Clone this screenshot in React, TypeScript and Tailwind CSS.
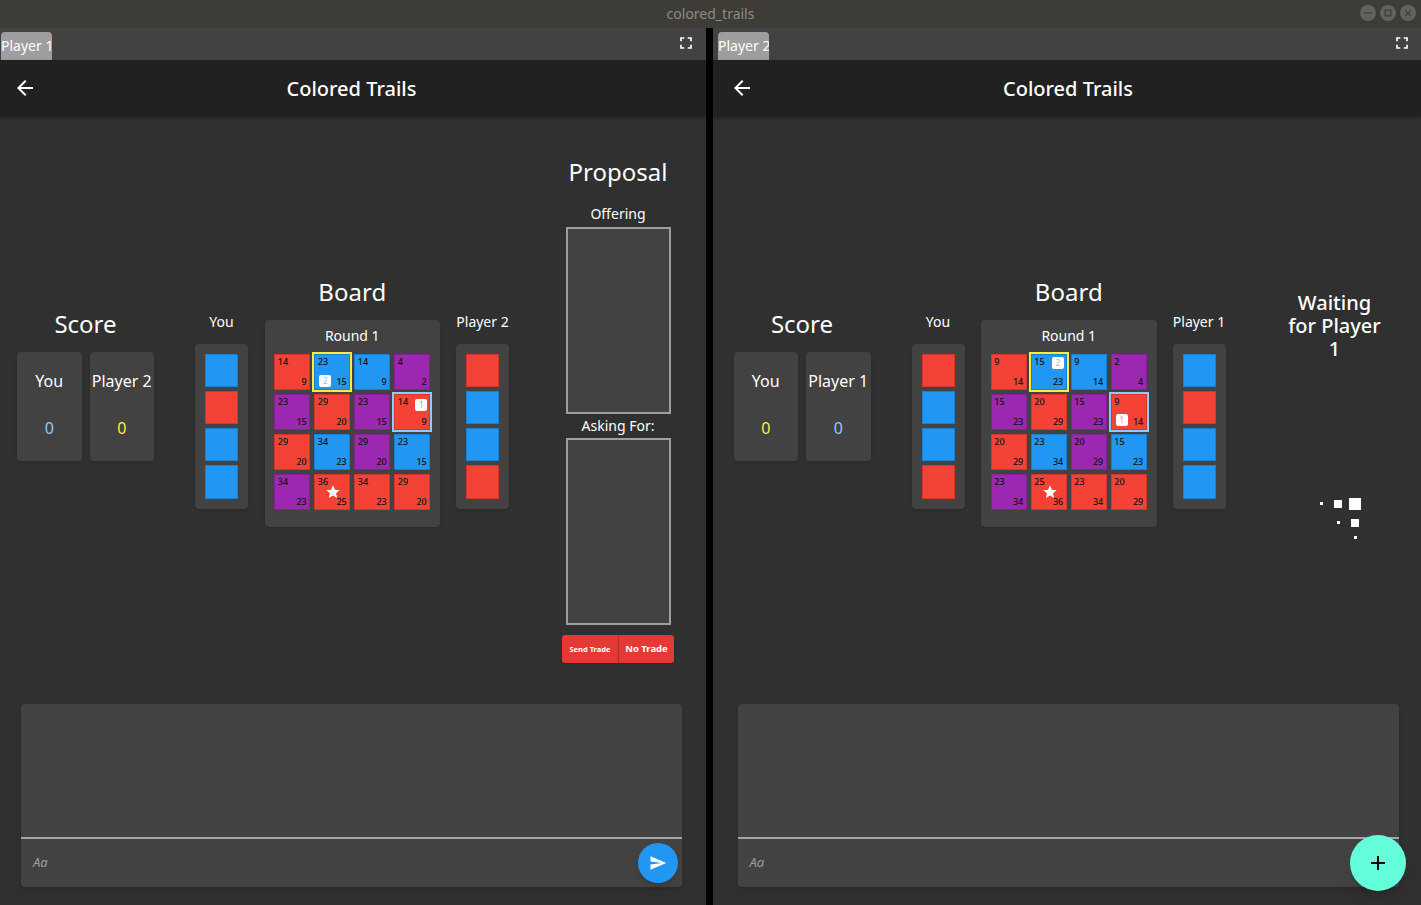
import React from "react";

type C = "r" | "b" | "p";
const bg: Record<C, string> = { r: "bg-[#f44336]", b: "bg-[#2196f3]", p: "bg-[#9c27b0]" };

type T = { c: C; a: number; z: number };
const layout: C[][] = [
  ["r", "b", "b", "p"],
  ["p", "r", "p", "r"],
  ["r", "b", "p", "b"],
  ["p", "r", "r", "r"],
];
const scores: [number, number][][] = [
  [[14, 9], [23, 15], [14, 9], [4, 2]],
  [[23, 15], [29, 20], [23, 15], [14, 9]],
  [[29, 20], [34, 23], [29, 20], [23, 15]],
  [[34, 23], [36, 25], [34, 23], [29, 20]],
];

function Icon({ d, size, className }: { d: string; size: number; className?: string }) {
  return (
    <svg width={size} height={size} viewBox="0 0 24 24" fill="currentColor" className={className}>
      <path d={d} />
    </svg>
  );
}

const ARROW = "M20 11H7.83l5.59-5.59L12 4l-8 8 8 8 1.41-1.41L7.83 13H20v-2z";
const FULL = "M7 14H5v5h5v-2H7v-3zm-2-4h2V7h3V5H5v5zm12 7h-3v2h5v-5h-2v3zM14 5v2h3v3h2V5h-5z";
const STAR = "M12 17.27L18.18 21l-1.64-7.03L22 9.24l-7.19-.61L12 2 9.19 8.63 2 9.24l5.46 4.73L5.82 21z";
const SEND = "M2.01 21L23 12 2.01 3 2 10l15 2-15 2z";
const PLUS = "M19 13h-6v6h-2v-6H5v-2h6V5h2v6h6v2z";

function Chip({ n, className }: { n: number; className: string }) {
  return (
    <span
      className={`absolute w-3 h-3 rounded-[2px] bg-white flex items-center justify-center text-[8px] leading-none font-medium ${className}`}
    >
      {n}
    </span>
  );
}

function Tile({ r, c, flipped }: { r: number; c: number; flipped: boolean }) {
  const color = layout[r][c];
  const [x, y] = scores[r][c];
  const top = flipped ? y : x;
  const bot = flipped ? x : y;
  const isYellow = r === 0 && c === 1;
  const isBlue = r === 1 && c === 3;
  return (
    <div
      className={`relative w-9 h-9 ${bg[color]} border border-black/15 flex flex-col justify-between px-[2.5px] pt-[1px] pb-[1px] text-[9px] leading-[12px] font-medium text-[#111] ${
        isYellow ? "outline-2 outline-offset-[0.5px] outline-[#ffeb3b]" : ""
      } ${isBlue ? "outline-2 outline-offset-[0.5px] outline-[#90caf9]" : ""}`}
    >
      <span className="text-left">{top}</span>
      <span className="text-right">{bot}</span>
      {isYellow && (
        <Chip n={2} className={`text-[#90caf9] ${flipped ? "top-[2px] right-[2px]" : "bottom-[2px] left-[4px]"}`} />
      )}
      {isBlue && (
        <Chip n={1} className={`text-[#ef9a9a] ${flipped ? "bottom-[3px] left-[4px]" : "top-[4px] right-[2px]"}`} />
      )}
      {r === 3 && c === 1 && (
        <Icon d={STAR} size={16} className="absolute left-[10px] top-[9px] text-white" />
      )}
    </div>
  );
}

function Hand({ label, colors, className }: { label: string; colors: C[]; className: string }) {
  return (
    <div className={`flex flex-col items-center w-[53px] shrink-0 ${className}`}>
      <div className="h-5 text-sm leading-5 whitespace-nowrap text-white">{label}</div>
      <div className="mt-3 w-[53px] h-[165px] rounded bg-[#424242] shadow-sm flex flex-col items-center gap-1 pt-[10px]">
        {colors.map((k, i) => (
          <div key={i} className={`w-[33px] h-[33.3px] ${bg[k]} border border-black/15`} />
        ))}
      </div>
    </div>
  );
}

function ScoreCard({ name, color }: { name: string; color: string }) {
  return (
    <div className="w-[64.5px] h-[109px] rounded bg-[#424242] shadow-sm flex flex-col items-center pt-[17px]">
      <div className="text-base leading-6 whitespace-nowrap text-white">{name}</div>
      <div className={`mt-[23px] text-base leading-6 ${color}`}>0</div>
    </div>
  );
}

function Spinner() {
  const sizes = [3, 8, 12, 0, 3, 8, 0, 0, 3];
  return (
    <div className="grid grid-cols-3 w-[50px] h-[50px] mt-[133px] ml-[8px]">
      {sizes.map((s, i) => (
        <div key={i} className="flex items-center justify-center">
          {s > 0 && <div className="bg-white" style={{ width: s, height: s }} />}
        </div>
      ))}
    </div>
  );
}

function ProposalBox() {
  return <div className="w-[105px] h-[187px] border-2 border-[#9e9e9e] bg-[#424242]" />;
}

function Pane({ me, other, flipped }: { me: C[]; other: C[]; flipped: boolean }) {
  const oppName = flipped ? "Player 1" : "Player 2";
  return (
    <div className={`h-full flex flex-col bg-[#303030] relative ${flipped ? "flex-1" : "w-[706px]"}`}>
      <div className={`h-8 shrink-0 bg-[#424242] flex items-end justify-between ${flipped ? "pl-[5px] pr-[9px]" : "pl-[1px] pr-[10px]"}`}>
        <div className="w-[51px] h-7 rounded-t-[4px] bg-[#9e9e9e] text-sm leading-7 text-white text-center whitespace-nowrap overflow-hidden">
          {flipped ? "Player 2" : "Player 1"}
        </div>
        <Icon d={FULL} size={20} className="text-white self-center -mt-[2px]" />
      </div>

      <div className={`w-[703px] flex-1 flex flex-col ${flipped ? "ml-[3.5px]" : ""}`}>
        <div className={`h-14 shrink-0 bg-[#212121] flex items-center text-white relative pl-[13px] shadow-[0_2px_4px_rgba(0,0,0,0.3)] ${flipped ? "w-[707.5px] -ml-[3.5px] pl-[16.5px]" : "w-[706px]"}`}>
          <Icon d={ARROW} size={24} />
          <div className={`absolute top-0 h-14 leading-[58px] w-[703px] text-center text-xl font-medium ${flipped ? "left-[3.5px]" : "left-0"}`}>
            Colored Trails
          </div>
        </div>

        <div className="h-[588px] flex items-center pl-[17px]">
          <div className="w-[137px] shrink-0 mb-[49px]">
            <div className="h-7 text-2xl leading-7 text-center text-white">Score</div>
            <div className="mt-[14px] flex justify-between">
              <ScoreCard name="You" color={flipped ? "text-[#ffeb3b]" : "text-[#90caf9]"} />
              <ScoreCard name={oppName} color={flipped ? "text-[#90caf9]" : "text-[#ffeb3b]"} />
            </div>
          </div>

          <Hand label="You" colors={me} className="ml-[41px]" />

          <div className="ml-[16.5px] w-[175.5px] shrink-0 mb-[15px]">
            <div className="h-7 text-2xl leading-7 text-center text-white">Board</div>
            <div className="mt-[14px] h-[207px] rounded bg-[#424242] shadow-sm pt-[6px]">
              <div className="h-5 text-sm leading-5 text-center text-white">Round 1</div>
              <div className="mt-[8px] grid grid-cols-4 gap-1 w-[156px] mx-auto">
                {layout.map((row, r) =>
                  row.map((_, c) => <Tile key={`${r}-${c}`} r={r} c={c} flipped={flipped} />)
                )}
              </div>
            </div>
          </div>

          <Hand label={oppName} colors={other} className="ml-[16px]" />

          {flipped ? (
            <div className="ml-[52px] w-[114px] shrink-0 mt-[14px] flex flex-col items-center">
              <div className="w-[100px] text-xl leading-[23px] font-medium text-center text-white">
                Waiting for Player 1
              </div>
              <Spinner />
            </div>
          ) : (
            <div className="ml-[52px] w-[114px] shrink-0 flex flex-col items-center text-white">
              <div className="h-7 text-2xl leading-7 whitespace-nowrap">Proposal</div>
              <div className="mt-[18px] h-5 text-sm leading-5">Offering</div>
              <div className="mt-[3px]">
                <ProposalBox />
              </div>
              <div className="mt-[2px] h-5 text-sm leading-5">Asking For:</div>
              <div className="mt-[2px]">
                <ProposalBox />
              </div>
              <div className="mt-[10px] flex h-7">
                <div className="w-14 rounded-l-[3px] bg-[#e53935] text-[7.5px] font-bold leading-7 text-center whitespace-nowrap shadow-sm">
                  Send Trade
                </div>
                <div className="w-14 rounded-r-[3px] bg-[#e53935] border-l border-black/20 text-[9.5px] font-bold leading-7 text-center whitespace-nowrap shadow-sm">
                  No Trade
                </div>
              </div>
            </div>
          )}
        </div>

        <div className="ml-[21px] w-[661px] h-[183px] rounded bg-[#424242] shadow-md flex flex-col">
          <div className="h-[133px]" />
          <div className="h-[2px] bg-[#a6a6a6]" />
          <div className="h-12 flex items-center justify-between pl-3 pr-1">
            <span className="italic text-[13px] text-[#9e9e9e]">Aa</span>
            {!flipped && (
              <div className="w-10 h-10 rounded-full bg-[#2196f3] flex items-center justify-center text-white shadow-md">
                <Icon d={SEND} size={18} />
              </div>
            )}
          </div>
        </div>
      </div>
    </div>
  );
}

export default function App() {
  return (
    <div
      className="w-[1421px] h-[905px] overflow-hidden flex flex-col bg-black text-white relative"
      style={{ fontFamily: '"Noto Sans", sans-serif' }}
    >
      <div className="h-7 shrink-0 bg-[#3d3c37] relative flex items-center justify-center text-sm text-[#8c8b85]">
        colored_trails
        <div className="absolute right-[5px] top-[5px] flex gap-1 text-[#3d3c37]">
          {["M6 12h12", "M7 7h10v10H7z", "M7 7l10 10M17 7L7 17"].map((d) => (
            <span key={d} className="w-4 h-4 rounded-full bg-[#62615c] flex items-center justify-center">
              <svg width="14" height="14" viewBox="0 0 24 24" fill="none" stroke="currentColor" strokeWidth="2">
                <path d={d} />
              </svg>
            </span>
          ))}
        </div>
      </div>
      <div className="flex-1 flex gap-[7px] min-h-0">
        <Pane me={["b", "r", "b", "b"]} other={["r", "b", "b", "r"]} flipped={false} />
        <Pane me={["r", "b", "b", "r"]} other={["b", "r", "b", "b"]} flipped={true} />
      </div>
      <div className="absolute right-[15px] bottom-[14px] w-14 h-14 rounded-full bg-[#64ffda] text-black flex items-center justify-center shadow-lg">
        <Icon d={PLUS} size={24} />
      </div>
    </div>
  );
}
